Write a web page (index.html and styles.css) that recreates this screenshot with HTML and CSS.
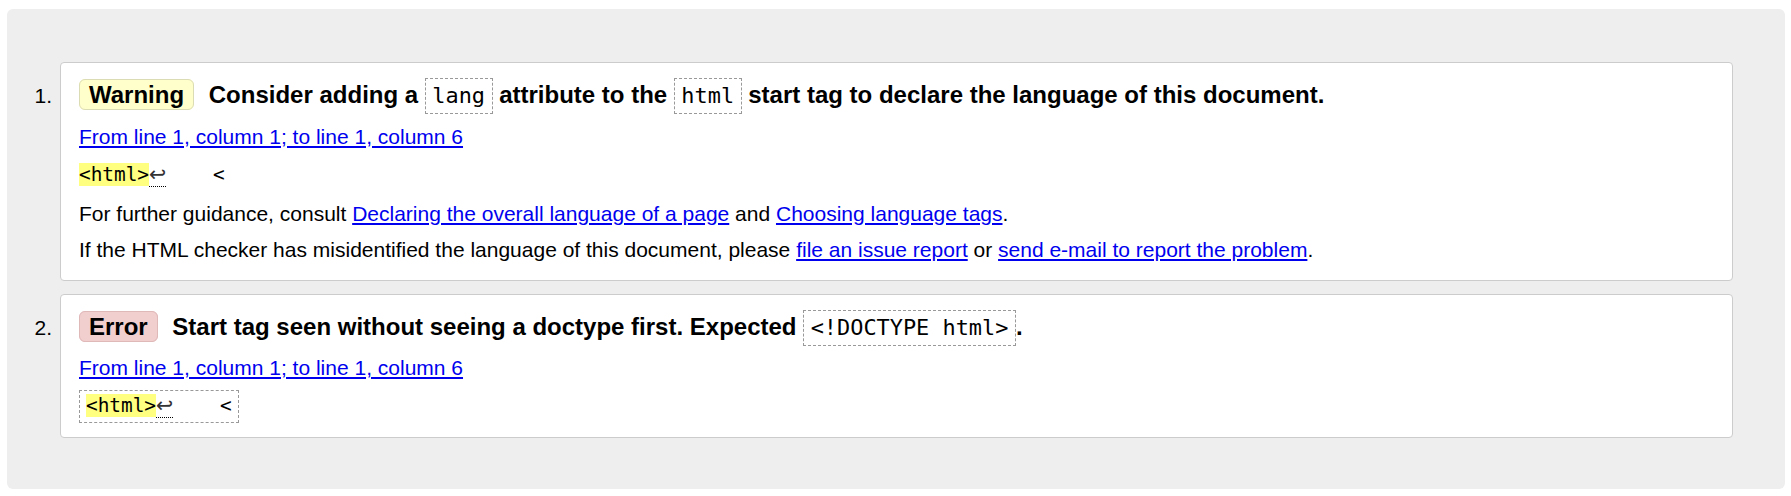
FILE: index.html
```html
<!DOCTYPE html>
<html lang="en">
<head>
<meta charset="utf-8">
<title>Checker messages</title>
<link rel="stylesheet" href="styles.css">
</head>
<body>
<div class="results">
  <ol class="msgs">
    <li class="msg">
      <span class="num">1.</span>
      <div class="card">
        <p class="title"><strong class="badge warn">Warning</strong> Consider adding a <code class="tcode">lang</code> attribute to the <code class="tcode">html</code> start tag to declare the language of this document.</p>
        <p class="loc"><a href="#">From line 1, column 1; to line 1, column 6</a></p>
        <p class="extract"><span class="src"><b class="hl">&lt;html&gt;</b><span class="lf">↩</span>    &lt;</span></p>
        <p class="note first">For further guidance, consult <a href="#">Declaring the overall language of a page</a> and <a href="#">Choosing language tags</a>.</p>
        <p class="note">If the HTML checker has misidentified the language of this document, please <a href="#">file an issue report</a> or <a href="#">send e-mail to report the problem</a>.</p>
      </div>
    </li>
    <li class="msg">
      <span class="num">2.</span>
      <div class="card card-err">
        <p class="title"><strong class="badge err">Error</strong> Start tag seen without seeing a doctype first. Expected <code class="tcode">&lt;!DOCTYPE html&gt;</code>.</p>
        <p class="loc"><a href="#">From line 1, column 1; to line 1, column 6</a></p>
        <p class="extract"><span class="src boxed"><b class="hl">&lt;html&gt;</b><span class="lf">↩</span>    &lt;</span></p>
      </div>
    </li>
  </ol>
</div>
</body>
</html>
```

FILE: styles.css
```css
html, body {
  margin: 0;
  padding: 0;
  background: #fff;
}

body {
  font-family: "Liberation Sans", Arial, sans-serif;
  font-size: 21px;
  color: #000;
  padding: 9px 6px 8px 7px;
}

.results {
  background: #eeeeee;
  border-radius: 6px;
  padding: 53px 52px 51px 0;
}

.msgs {
  list-style: none;
  margin: 0;
  padding: 0;
  display: flex;
  flex-direction: column;
  gap: 13px;
}

.msg {
  display: grid;
  grid-template-columns: 53px 1fr;
  align-items: baseline;
}

.num {
  text-align: right;
  padding-right: 8px;
  line-height: 24px;
}

.card {
  background: #fff;
  border: 1px solid #cccccc;
  border-radius: 4px;
  padding: 13px 18px 18px 18px;
}

.card.card-err {
  padding-bottom: 19px;
}

.card p {
  margin: 0;
  line-height: 24px;
}

.card p.title {
  font-weight: bold;
  font-size: 24px;
  line-height: 38px;
}

.badge {
  font-weight: bold;
  line-height: 1;
  padding: 1px 9px 1px 9px;
  border: 1px solid;
  border-radius: 6px;
  margin-right: 8px;
}

.badge.warn {
  background: #ffffcc;
  border-color: #dcdcb4;
}

.badge.err {
  background: #f2cfcf;
  border-color: #dfb8b8;
}

.tcode {
  font-family: "DejaVu Sans Mono", "Liberation Mono", monospace;
  font-weight: normal;
  font-size: 21.9px;
  line-height: 1;
  border: 1px dashed #999999;
  padding: 4px 6.5px 5px;
}

.card p.loc {
  margin-top: 10.5px;
}

a {
  color: #0000ee;
  text-decoration: underline;
}

.card p.extract {
  margin-top: 14px;
  font-family: "DejaVu Sans Mono", "Liberation Mono", monospace;
  font-size: 19.4px;
  white-space: pre;
}

.src {
  line-height: 1;
}

.src.boxed {
  border: 1px dashed #999999;
  padding: 3px 6px 5px 6px;
}

.hl {
  font-weight: normal;
  background: #ffff80;
}

.lf {
  font-family: "DejaVu Sans", sans-serif;
  font-size: 20.5px;
  color: #333;
  border-bottom: 1px dotted #000;
}

.card p.note {
  margin-top: 12px;
}

.card p.note.first {
  margin-top: 15px;
}
```
